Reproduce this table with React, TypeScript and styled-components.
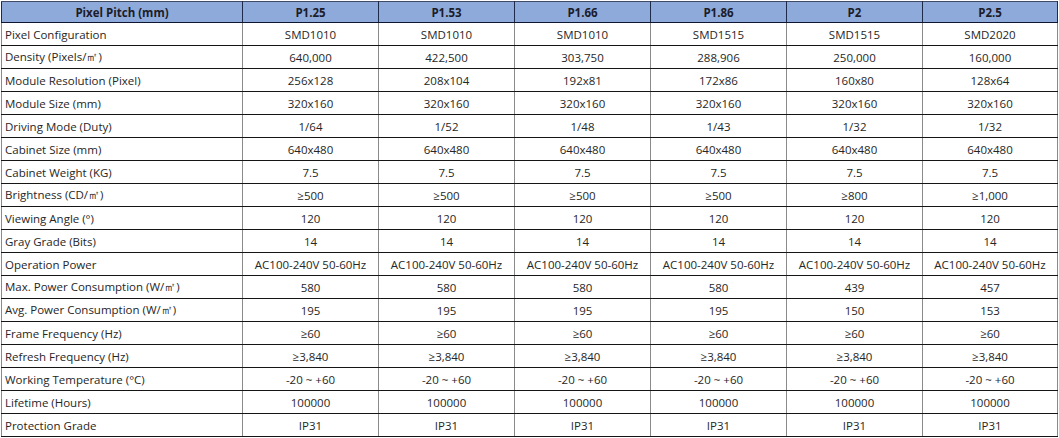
import React from "react";
import styled, { createGlobalStyle } from "styled-components";

const Global = createGlobalStyle`
  html, body { margin: 0; padding: 0; background: #ffffff; }
  body { font-family: "Open Sans", "Noto Sans", "DejaVu Sans", sans-serif; }
`;

const Wrap = styled.div`
  padding: 1px 2px 0 1px;
  width: 1059px;
  box-sizing: border-box;
`;

const Table = styled.table`
  width: 1056px;
  border-collapse: collapse;
  table-layout: fixed;
  font-size: 11.5px;
  color: #262626;
`;

const HeadCell = styled.th`
  background: #8eaadb;
  height: 20px;
  padding: 0;
  font-weight: 700;
  color: #1c1c28;
  text-align: center;
  border: 1px solid #1d2a4a;
  border-bottom: 1px solid #0e1633;
  border-top: 1px solid #404a66;
`;

const Cell = styled.td<{ $first?: boolean }>`
  height: 22px;
  padding: 0 0 0 ${(p) => (p.$first ? "3px" : "0")};
  text-align: ${(p) => (p.$first ? "left" : "center")};
  border-top: 1px solid #151515;
  border-bottom: 1px solid #151515;
  border-left: 1px solid #8a8a8a;
  border-right: 1px solid #8a8a8a;
  white-space: nowrap;
  overflow: hidden;
`;

const heads = ["Pixel Pitch (mm)", "P1.25", "P1.53", "P1.66", "P1.86", "P2", "P2.5"];

const rows: string[][] = [
  ["Pixel Configuration", "SMD1010", "SMD1010", "SMD1010", "SMD1515", "SMD1515", "SMD2020"],
  ["Density (Pixels/㎡)", "640,000", "422,500", "303,750", "288,906", "250,000", "160,000"],
  ["Module Resolution (Pixel)", "256x128", "208x104", "192x81", "172x86", "160x80", "128x64"],
  ["Module Size (mm)", "320x160", "320x160", "320x160", "320x160", "320x160", "320x160"],
  ["Driving Mode (Duty)", "1/64", "1/52", "1/48", "1/43", "1/32", "1/32"],
  ["Cabinet Size (mm)", "640x480", "640x480", "640x480", "640x480", "640x480", "640x480"],
  ["Cabinet Weight (KG)", "7.5", "7.5", "7.5", "7.5", "7.5", "7.5"],
  ["Brightness (CD/㎡)", "≥500", "≥500", "≥500", "≥500", "≥800", "≥1,000"],
  ["Viewing Angle (°)", "120", "120", "120", "120", "120", "120"],
  ["Gray Grade (Bits)", "14", "14", "14", "14", "14", "14"],
  ["Operation Power", "AC100-240V 50-60Hz", "AC100-240V 50-60Hz", "AC100-240V 50-60Hz", "AC100-240V 50-60Hz", "AC100-240V 50-60Hz", "AC100-240V 50-60Hz"],
  ["Max. Power Consumption (W/㎡)", "580", "580", "580", "580", "439", "457"],
  ["Avg. Power Consumption (W/㎡)", "195", "195", "195", "195", "150", "153"],
  ["Frame Frequency (Hz)", "≥60", "≥60", "≥60", "≥60", "≥60", "≥60"],
  ["Refresh Frequency (Hz)", "≥3,840", "≥3,840", "≥3,840", "≥3,840", "≥3,840", "≥3,840"],
  ["Working Temperature (°C)", "-20 ~ +60", "-20 ~ +60", "-20 ~ +60", "-20 ~ +60", "-20 ~ +60", "-20 ~ +60"],
  ["Lifetime (Hours)", "100000", "100000", "100000", "100000", "100000", "100000"],
  ["Protection Grade", "IP31", "IP31", "IP31", "IP31", "IP31", "IP31"],
];

const widths = [241, 136, 136, 136, 136, 136, 135];

export default function App() {
  return (
    <Wrap>
      <Global />
      <Table>
        <colgroup>
          {widths.map((w, i) => (
            <col key={i} style={{ width: w }} />
          ))}
        </colgroup>
        <thead>
          <tr>
            {heads.map((h) => (
              <HeadCell key={h}>{h}</HeadCell>
            ))}
          </tr>
        </thead>
        <tbody>
          {rows.map((r) => (
            <tr key={r[0]}>
              {r.map((c, i) => (
                <Cell key={i} $first={i === 0}>
                  {c}
                </Cell>
              ))}
            </tr>
          ))}
        </tbody>
      </Table>
    </Wrap>
  );
}
